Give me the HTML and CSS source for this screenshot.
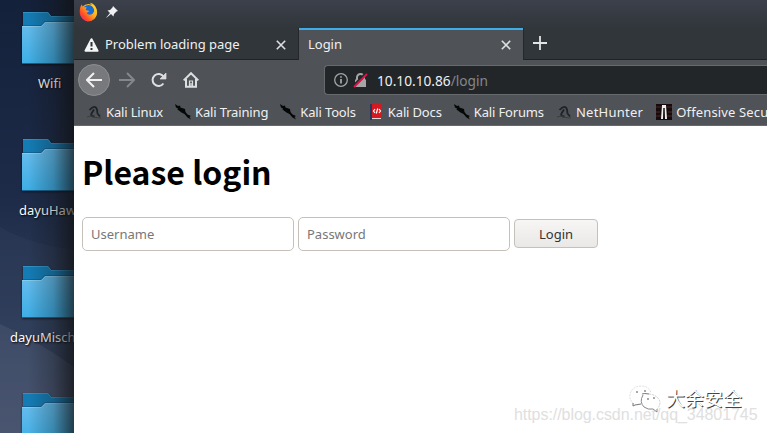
FILE: index.html
```html
<!DOCTYPE html>
<html lang="en">
<head>
<meta charset="utf-8">
<title>Login</title>
<link rel="stylesheet" href="styles.css">
</head>
<body>
<svg width="0" height="0" class="defs">
  <defs>
    <linearGradient id="front" x1="0" y1="0" x2="0.25" y2="1"><stop stop-color="#68bdec"/><stop offset="1" stop-color="#3daee6"/></linearGradient>
    <linearGradient id="fire" x1="1" y1="0" x2="0" y2="1"><stop stop-color="#ffeb38"/><stop offset=".45" stop-color="#ffa61d"/><stop offset=".72" stop-color="#ff4c26"/><stop offset="1" stop-color="#e1138c"/></linearGradient>
    <symbol id="folder" viewBox="0 0 56 55">
      <path d="M1 1H26L29 5H55V50H1Z" fill="#147cb5"/>
      <path d="M1 1.5H26L29 5.5H55" fill="none" stroke="#3292c5"/>
      <path d="M0 15H19L23 11H56V52H0Z" fill="url(#front)"/>
      <path d="M0 15.5H19.5L23.5 11.5H56" fill="none" stroke="#83cbef"/>
      <path d="M0 52.5H56" stroke="#18628b"/>
      <path d="M1 14.5H19L22.5 10.5H55" fill="none" stroke="#126497"/>
    </symbol>
    <symbol id="dragon" viewBox="0 0 16 16">
      <path d="M0 0L3 2 5 1.5 5.5 3.5 10 5 10.5 8 12.5 10.5 16 12 14.5 13 16 15.5 12.5 13.5 9.5 10 6.5 8.5 2.5 5.5 3 4.5 1 3.5Z" fill="#050606"/>
    </symbol>
    <symbol id="kali" viewBox="0 0 16 16">
      <path d="M3.5 6Q9 0 11 5.5L11.5 9.5 14 12.5M8 5.5L5.5 9.5Q4 12.5 8.5 12.5" fill="none" stroke="#202325" stroke-width="1.8"/>
      <path d="M1 13L5 12 9 13.5 15 14" fill="none" stroke="#393d40"/>
    </symbol>
  </defs>
</svg>
<div class="screen">
  <aside class="desktop">
    <svg class="wallpaper" viewBox="0 0 74 433"><path d="M0 227Q35 246 74 249V367Q38 341 0 324Z" fill="#203150" opacity=".3"/><path d="M0 227Q35 246 74 249V433H0Z" fill="#536078" opacity=".13"/><path d="M0 324Q38 341 74 367V433H0Z" fill="#68748c" opacity=".18"/></svg>
    <div class="shortcut wifi"><svg class="folder"><use href="#folder"/></svg><span>Wifi</span></div>
    <div class="shortcut"><svg class="folder"><use href="#folder"/></svg><span>dayuHaw</span></div>
    <div class="shortcut misc"><svg class="folder"><use href="#folder"/></svg><span>dayuMisch</span></div>
    <div class="shortcut"><svg class="folder"><use href="#folder"/></svg></div>
    <div class="shade"></div>
  </aside>
  <main class="window">
    <header class="titlebar">
      <svg class="firefox" viewBox="0 0 20 20"><circle cx="10" cy="10.5" r="9" fill="url(#fire)"/><circle cx="10" cy="8.5" r="6" fill="#176cd5"/><path d="M1 12Q0 5 3 2L4 5 8 5 7 8 11 9 8 11Q10 14 14 12 18 9 14 4 13 1 11 0 19 2 19 11 17 20 9 20 3 18 1 12Z" fill="url(#fire)"/></svg>
      <svg class="pin" viewBox="0 0 12 12"><path d="M7 0L12 5 10.5 5.5 8 8 7.5 10.5 5 8 .5 11.7.3 11.5 4 7 1.5 4.5 4 4 6.5 1.5Z" fill="#eff0f1"/></svg>
    </header>
    <nav class="tabs">
      <div class="tab">
        <svg class="warning" viewBox="0 0 15 14"><path d="M7.5 1.2L13.5 12.8H1.5Z" fill="#f4f5f5" stroke="#f4f5f5" stroke-width="2" stroke-linejoin="round"/><path d="M7.5 4V8.6M7.5 10V12" stroke="#30353a" stroke-width="2"/></svg>
        <span>Problem loading page</span>
        <svg class="close" viewBox="0 0 10 10"><path d="M.8.8L9.2 9.2M9.2.8L.8 9.2"/></svg>
      </div>
      <div class="tab active"><span>Login</span><svg class="close" viewBox="0 0 10 10"><path d="M.8.8L9.2 9.2M9.2.8L.8 9.2"/></svg></div>
      <svg class="plus" viewBox="0 0 14 14"><path d="M7 0V14M0 7H14"/></svg>
    </nav>
    <div class="toolbar">
      <div class="back"><svg viewBox="0 0 16 16"><path d="M16 8H1M8 1L1 8 8 15"/></svg></div>
      <svg class="forward" viewBox="0 0 16 16"><path d="M0 8H15M8 1L15 8 8 15"/></svg>
      <svg class="reload" viewBox="0 0 16 16"><path d="M12.4 11.5A6 6 0 1 1 12.5 4.5"/><path d="M15 1V7H9Z" fill="#d7d9da" stroke-width=".7"/></svg>
      <svg class="home" viewBox="0 0 16 16"><path d="M.7 8.4L8 1.2 15.3 8.4M3 7V14.8H13V7"/><path d="M6.5 14V9H9.5V14M8 11V14" stroke-width="1.2"/></svg>
      <div class="address">
        <svg class="info" viewBox="0 0 14 14"><circle cx="7" cy="7" r="6.3"/><path d="M7 6V10.5M7 3.2V4.8" stroke-width="1.8"/></svg>
        <svg class="lock" viewBox="0 0 15 15"><path d="M4 7V4.5A3.5 3.5 0 0 1 11 4.5V7" fill="none" stroke="#a4a6a7" stroke-width="2"/><path d="M2 6.5H13V14H2Z" fill="#a4a6a7"/><path d="M0 13L13 0" stroke="#232629" stroke-width="2"/><path d="M1 14L14 1" stroke="#ed0b45" stroke-width="1.9"/></svg>
        <span class="url">10.10.10.86<em>/login</em></span>
      </div>
    </div>
    <nav class="bookmarks">
      <span><svg><use href="#kali"/></svg>Kali Linux</span>
      <span><svg><use href="#dragon"/></svg>Kali Training</span>
      <span><svg><use href="#dragon"/></svg>Kali Tools</span>
      <span><svg viewBox="0 0 16 16"><path d="M2 0H14V14H13V16H2Z" fill="#d51920"/><path d="M2 0H4V16H2Z" fill="#28365c"/><path d="M4 14.5H13" stroke="#ded8d8"/><path d="M7 5L5.5 7 7 9M11 5L12.5 7 11 9M9.7 4.5L8.3 9.5" fill="none" stroke="#fff" stroke-width="1.2"/></svg>Kali Docs</span>
      <span><svg><use href="#dragon"/></svg>Kali Forums</span>
      <span class="wide"><svg><use href="#kali"/></svg>NetHunter</span>
      <span class="last"><svg viewBox="0 0 16 16"><path d="M0 0H16V16H0Z" fill="#160b0c"/><path d="M0 3H5M11 3H16M0 8H4M12 8H16M0 12H5M11 12H16" stroke="#4a292b"/><path d="M6 1H10L11 15H9L8 6 7 15H5Z" fill="#eee"/><path d="M8 4V15" stroke="#111" stroke-width="1.5"/></svg>Offensive Secu</span>
    </nav>
    <section class="page">
      <h1>Please login</h1>
      <form><input aria-label="Username" placeholder="Username"><input aria-label="Password" type="password" placeholder="Password"><button type="button">Login</button></form>
    </section>
  </main>
  <div class="source">https://blog.csdn.net/qq_34801745</div>
  <div class="credit">
    <svg viewBox="0 0 32 28"><path d="M13 20Q11 14 15 9 21 7 27 11 33 17 28 23L28 27 24 25Q16 26 13 20" fill="#fff"/><path d="M5 19Q0 15 1 10 2 2 12 1 20 1 22 8" stroke="#ddd" stroke-dasharray="2 1"/><path d="M4 18V21L6 20 12 19M13 9Q15 8 20 9" stroke="#777"/><path d="M14 10Q10 17 15 22 19 25 24 24L28 27V24" stroke="#888"/><path d="M20 9Q29 10 31 17 31 21 28 24" stroke="#ccc" stroke-dasharray="2 1"/><path d="M7 7H9M15 6H17M18 14H20M24 13H26" stroke="#555"/></svg><span>大余安全</span>
  </div>
</div>
</body>
</html>
```

FILE: styles.css
```css
* { box-sizing: border-box; }
body { margin: 0; font: 13.33px/18px "Noto Sans", sans-serif; }
.defs { position: absolute; }
.screen { position: relative; display: flex; width: 767px; height: 433px; overflow: hidden; }
.desktop { position: relative; width: 74px; flex: none; overflow: hidden; padding-top: 11px; background: linear-gradient(#14213a, #1d2b49 45%, #303f5b 75%, #414e69); }
.wallpaper { position: absolute; inset: 0; width: 74px; height: 433px; }
.shortcut { position: relative; height: 127px; color: #fff; }
.folder { display: block; width: 56px; height: 55px; margin-left: 22px; filter: drop-shadow(0 1px 1px #0008); }
.shortcut span { display: block; margin: 8px 0 0 19px; font-size: 13px; line-height: 18px; text-shadow: 1px 1px 2px #000; white-space: nowrap; }
.shortcut.wifi span { margin-left: 38px; }
.shortcut.misc span { margin-left: 10px; }
.shade { position: absolute; inset: 0 0 0 auto; width: 46px; background: linear-gradient(90deg, transparent, #1114 55%, #111b); }
.window { flex: 1; min-width: 0; background: #fff; overflow: hidden; }
.titlebar { height: 28px; display: flex; padding: 2px 0 0 5px; background: linear-gradient(#3c404b, #31363b); }
.firefox { width: 19px; height: 20px; }
.pin { width: 12px; height: 12px; margin: 4px 0 0 8px; }
.tabs { display: flex; height: 32px; background: #31363b; box-shadow: inset 0 -1px #202326; color: #eff0f1; }
.tab { width: 225px; display: flex; align-items: center; padding: 1px 13px 0 10px; }
.warning { width: 15px; height: 14px; }
.tab span { margin: 0 0 2px 6px; font-size: 13px; letter-spacing: -.02px; white-space: nowrap; }
.close { width: 10px; height: 10px; margin-left: auto; fill: none; stroke: #dedfe0; stroke-width: 1.6; }
.active { width: 224px; background: #4f5257; border-top: 2px solid #3daee9; box-shadow: -1px 0 #25282b, 1px 0 #25282b; padding: 0 12px 1px 9px; }
.active span { margin-left: 0; }
.plus { width: 14px; height: 14px; margin: 8px 0 0 10px; fill: none; stroke: #e3e4e5; stroke-width: 1.8; }
.toolbar { height: 40px; display: flex; align-items: center; background: #4f5257; fill: none; stroke: #dedfe0; stroke-width: 2; }
.back { display: grid; place-items: center; width: 32px; height: 32px; margin-left: 4px; border: 1px solid #8d8f92; border-radius: 50%; background: #77797c; }
.back svg { width: 16px; height: 16px; stroke: #f0f0f1; }
.forward { width: 16px; height: 16px; margin-left: 9px; stroke: #85878a; }
.reload { width: 16px; height: 16px; margin-left: 16px; }
.home { width: 16px; height: 16px; margin-left: 16px; }
.address { flex: 1; height: 30px; margin-left: 125px; display: flex; align-items: center; padding-left: 9px; border: 1px solid #686b6e; border-right: 0; border-radius: 4px 0 0 4px; background: #232629; }
.info { width: 14px; height: 14px; stroke: #a2a4a5; stroke-width: 1.3; }
.lock { width: 15px; height: 15px; margin-left: 5px; stroke: none; }
.url { margin: 2px 0 0 9px; color: #eff0f1; font-size: 13.7px; }
.url em { font-style: normal; color: #858789; }
.bookmarks { height: 26px; display: flex; gap: 12px; padding: 0 0 1px 12px; align-items: center; overflow: hidden; white-space: nowrap; color: #eff0f1; background: #4f5257; border-bottom: 1px solid #66686c; font-size: 13px; letter-spacing: -.15px; }
.bookmarks span { flex: none; display: flex; align-items: center; }
.bookmarks .wide { letter-spacing: .25px; }
.bookmarks .last { margin-left: 1px; letter-spacing: .15px; }
.bookmarks svg { width: 16px; height: 16px; margin-right: 4px; }
.page { padding: 21px 8px; }
h1 { margin: 0 0 22px; font: bold 32px/48px "Noto Sans CJK SC", sans-serif; color: #000; }
form { display: flex; align-items: center; gap: 4px; }
input { width: 212px; height: 34px; padding: 0 8px; border: 1px solid #c6c0bb; border-radius: 5px; outline: 0; font: 13px "Noto Sans", sans-serif; }
input::placeholder { color: #777; opacity: 1; }
button { width: 84px; height: 29px; margin-bottom: 1px; padding: 0; border: 1px solid #c6c0bb; border-radius: 4px; background: linear-gradient(#f7f6f5, #e9e8e6); color: #2e3436; font: 13px "Noto Sans", sans-serif; }
.source { position: absolute; left: 514px; top: 405px; color: #e0e0e0; font: 16px/20px "Liberation Sans", sans-serif; letter-spacing: -.06px; white-space: nowrap; }
.credit { position: absolute; left: 629px; top: 385px; display: flex; }
.credit svg { width: 32px; height: 28px; fill: none; }
.credit span { margin: 1px 0 0 5px; font: 19px/24px "Noto Sans CJK SC", sans-serif; color: #fff; text-shadow: 1px 1px 0 #444; }
```
